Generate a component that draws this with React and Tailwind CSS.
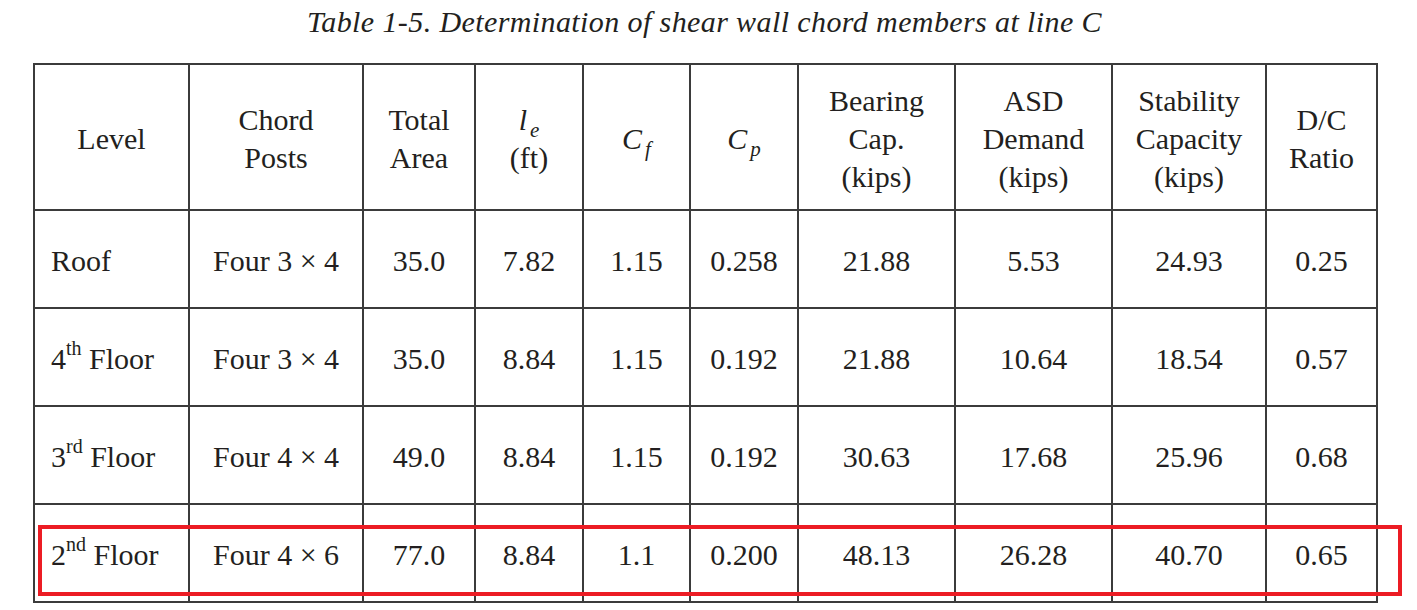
import React from "react";

const widths = [155, 174, 112, 108, 107, 108, 157, 157, 154, 111];

const rows = [
  { level: "Roof", sup: null, posts: "Four 3 × 4", area: "35.0", le: "7.82", cf: "1.15", cp: "0.258", bearing: "21.88", demand: "5.53", stability: "24.93", dc: "0.25" },
  { level: "Floor", num: "4", sup: "th", posts: "Four 3 × 4", area: "35.0", le: "8.84", cf: "1.15", cp: "0.192", bearing: "21.88", demand: "10.64", stability: "18.54", dc: "0.57" },
  { level: "Floor", num: "3", sup: "rd", posts: "Four 4 × 4", area: "49.0", le: "8.84", cf: "1.15", cp: "0.192", bearing: "30.63", demand: "17.68", stability: "25.96", dc: "0.68" },
  { level: "Floor", num: "2", sup: "nd", posts: "Four 4 × 6", area: "77.0", le: "8.84", cf: "1.1", cp: "0.200", bearing: "48.13", demand: "26.28", stability: "40.70", dc: "0.65" },
];

const cell = "border-2 border-[#3b3b3b] text-center align-middle px-0 pt-[4px] pb-0";

function Sym({ base, sub }) {
  return (
    <span className="italic">
      {base}
      <sub className="text-[21px] relative top-[7px] ml-[3px]">{sub}</sub>
    </span>
  );
}

export default function App() {
  return (
    <div
      className="w-[1417px] h-[610px] bg-white text-[#231f20] overflow-hidden"
      style={{ fontFamily: '"Liberation Serif", "Times New Roman", serif' }}
    >
      <div className="pl-[33px] pt-[4px]">
        <p className="w-[1343px] text-center italic text-[30px] leading-[36px] tracking-[0.4px]">
          Table 1-5. Determination of shear wall chord members at line C
        </p>

        <div className="relative mt-[23px] w-[1343px]">
          <table className="table-fixed border-collapse w-[1343px] text-[30px] leading-[38px]">
            <colgroup>
              {widths.map((w, i) => (
                <col key={i} style={{ width: w }} />
              ))}
            </colgroup>
            <thead>
              <tr className="h-[146px]">
                <th className={`${cell} font-normal`}>Level</th>
                <th className={`${cell} font-normal`}>Chord<br />Posts</th>
                <th className={`${cell} font-normal`}>Total<br />Area</th>
                <th className={`${cell} font-normal`}>
                  <Sym base="l" sub="e" />
                  <br />
                  (ft)
                </th>
                <th className={`${cell} font-normal`}>
                  <Sym base="C" sub="f" />
                </th>
                <th className={`${cell} font-normal`}>
                  <Sym base="C" sub="p" />
                </th>
                <th className={`${cell} font-normal`}>Bearing<br />Cap.<br />(kips)</th>
                <th className={`${cell} font-normal`}>ASD<br />Demand<br />(kips)</th>
                <th className={`${cell} font-normal`}>Stability<br />Capacity<br />(kips)</th>
                <th className={`${cell} font-normal`}>D/C<br />Ratio</th>
              </tr>
            </thead>
            <tbody>
              {rows.map((r, i) => (
                <tr key={i} className="h-[98px]">
                  <td className={`${cell} !text-left pl-[16px]`}>
                    {r.num ? (
                      <>
                        {r.num}
                        <sup className="text-[20px] relative -top-[14px]">{r.sup}</sup>{" "}
                        {r.level}
                      </>
                    ) : (
                      r.level
                    )}
                  </td>
                  <td className={cell}>{r.posts}</td>
                  <td className={cell}>{r.area}</td>
                  <td className={cell}>{r.le}</td>
                  <td className={cell}>{r.cf}</td>
                  <td className={cell}>{r.cp}</td>
                  <td className={cell}>{r.bearing}</td>
                  <td className={cell}>{r.demand}</td>
                  <td className={cell}>{r.stability}</td>
                  <td className={cell}>{r.dc}</td>
                </tr>
              ))}
            </tbody>
          </table>

          <div className="absolute left-[5px] top-[462px] w-[1364px] h-[71px] border-[4px] border-[#ec1c24] pointer-events-none" />
        </div>
      </div>
    </div>
  );
}
